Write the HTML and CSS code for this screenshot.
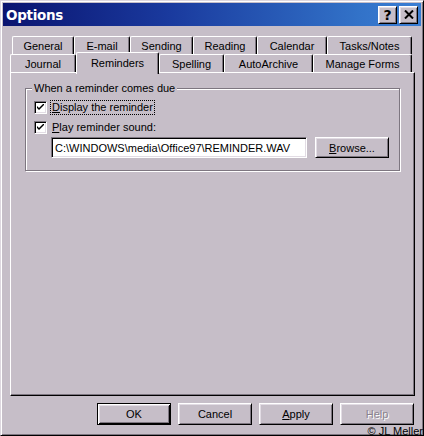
FILE: index.html
```html
<!DOCTYPE html>
<html>
<head>
<meta charset="utf-8">
<title>Options</title>
<link rel="stylesheet" href="styles.css">
</head>
<body>
<div class="window">
  <div class="titlebar">
    <span class="title">Options</span>
    <div class="tb-buttons">
      <span class="tb-btn help">?</span>
      <span class="tb-btn close"><svg width="10" height="9" viewBox="0 0 10 9"><path d="M1 0.5 L9 8.5 M9 0.5 L1 8.5" stroke="#000" stroke-width="2" fill="none"/></svg></span>
    </div>
  </div>
  <div class="content">
    <div class="tabs">
      <div class="tabrow back">
        <div class="tab w-general">General</div>
        <div class="tab w-email">E-mail</div>
        <div class="tab w-sending">Sending</div>
        <div class="tab w-reading">Reading</div>
        <div class="tab w-calendar">Calendar</div>
        <div class="tab w-tasks">Tasks/Notes</div>
      </div>
      <div class="tabrow front">
        <div class="tab w-journal">Journal</div>
        <div class="tab selected w-reminders">Reminders</div>
        <div class="tab w-spelling">Spelling</div>
        <div class="tab w-archive">AutoArchive</div>
        <div class="tab w-forms">Manage Forms</div>
      </div>
    </div>
    <div class="panel">
      <div class="group">
        <span class="legend">When a reminder comes due</span>
        <div class="row">
          <span class="checkbox"><svg width="7" height="7" viewBox="0 0 7 7"><path d="M0 2 L0 4 L2 6 L7 1 L7 -1 L2 4 Z" fill="#000"/></svg></span>
          <span class="label focus"><u>D</u>isplay the reminder</span>
        </div>
        <div class="row">
          <span class="checkbox"><svg width="7" height="7" viewBox="0 0 7 7"><path d="M0 2 L0 4 L2 6 L7 1 L7 -1 L2 4 Z" fill="#000"/></svg></span>
          <span class="label"><u>P</u>lay reminder sound:</span>
        </div>
        <div class="filerow">
          <div class="field">C:\WINDOWS\media\Office97\REMINDER.WAV</div>
          <div class="btn browse"><u>B</u>rowse...</div>
        </div>
      </div>
    </div>
    <div class="buttons">
      <div class="btn default">OK</div>
      <div class="btn">Cancel</div>
      <div class="btn"><u>A</u>pply</div>
      <div class="btn disabled">Help</div>
    </div>
  </div>
  <div class="copyright">© JL Meller</div>
</div>
</body>
</html>
```

FILE: styles.css
```css
html, body {
  margin: 0;
  padding: 0;
  background: #c6bec8;
}

.window {
  position: relative;
  width: 424px;
  height: 436px;
  box-sizing: border-box;
  background: #c6bec8;
  border: 1px solid;
  border-color: #ddd7df #000 #000 #ddd7df;
  box-shadow: inset 1px 1px 0 #fff, inset -1px -1px 0 #7d7680;
  padding: 2px;
  font-family: "Liberation Sans", Arial, sans-serif;
  font-size: 11px;
  color: #000;
  overflow: hidden;
}

.titlebar {
  height: 23px;
  display: flex;
  align-items: center;
  justify-content: space-between;
  background: linear-gradient(90deg, #0a1470 0%, #1a3a9e 40%, #3272c8 85%, #3a7ed4 100%);
  padding: 0 3px 0 3px;
}

.title {
  color: #fff;
  font-family: "DejaVu Sans", Verdana, sans-serif;
  font-weight: bold;
  font-size: 13.5px;
  letter-spacing: -0.3px;
}

.tb-buttons {
  display: flex;
  gap: 2px;
}

.tb-btn {
  box-sizing: border-box;
  width: 19px;
  height: 18px;
  display: flex;
  align-items: center;
  justify-content: center;
  background: #c6bec8;
  border: 1px solid;
  border-color: #fff #000 #000 #fff;
  box-shadow: inset 1px 1px 0 #e2dce4, inset -1px -1px 0 #7d7680;
}

.tb-btn.help {
  font-family: "DejaVu Sans", sans-serif;
  font-weight: bold;
  font-size: 14px;
  line-height: 1;
}

.content {
  padding: 10px 6px 0 7px;
}

.tabrow {
  display: flex;
  height: 18px;
}

.tabrow.back {
  margin-left: 2px;
}

.tab {
  box-sizing: border-box;
  height: 18px;
  display: flex;
  align-items: center;
  justify-content: center;
  background: #c6bec8;
  border-top: 1px solid #fff;
  border-left: 1px solid #fff;
  border-right: 1px solid #000;
  border-radius: 2px 2px 0 0;
  box-shadow: inset -1px 0 0 #7d7680;
  padding-top: 1px;
}

.tab.selected {
  position: relative;
  z-index: 2;
  height: 22px;
  margin-top: -2px;
  margin-bottom: -2px;
  padding-bottom: 3px;
}

.w-general { width: 62px; }
.w-email { width: 56px; }
.w-sending { width: 63px; }
.w-reading { width: 64px; }
.w-calendar { width: 70px; }
.w-tasks { width: 85px; }
.w-journal { width: 66px; }
.w-reminders { width: 83px; }
.w-spelling { width: 65px; }
.w-archive { width: 89px; }
.w-forms { width: 99px; }

.panel {
  box-sizing: border-box;
  height: 324px;
  border: 1px solid;
  border-color: #fff #000 #000 #fff;
  box-shadow: inset -1px -1px 0 #7d7680;
  padding: 15px 14px 0 14px;
}

.group {
  position: relative;
  border: 1px solid #7d7680;
  box-shadow: inset 1px 1px 0 #fff, 1px 1px 0 #fff;
  padding: 8px 8px 12px 8px;
}

.legend {
  position: absolute;
  top: -7px;
  left: 6px;
  padding: 0 2px;
  background: #c6bec8;
  line-height: 13px;
}

.row {
  display: flex;
  align-items: center;
  height: 20px;
}

.checkbox {
  box-sizing: border-box;
  width: 13px;
  height: 13px;
  background: #fff;
  border: 1px solid;
  border-color: #7d7680 #fff #fff #7d7680;
  box-shadow: inset 1px 1px 0 #000, inset -1px -1px 0 #e2dce4;
  display: flex;
  align-items: center;
  justify-content: center;
}

.label {
  margin-left: 3px;
  padding: 0 1px;
  line-height: 13px;
  border: 1px solid transparent;
}

.label.focus {
  border: 1px dotted #000;
}

.filerow {
  display: flex;
  gap: 8px;
  margin-left: 17px;
}

.field {
  box-sizing: border-box;
  width: 256px;
  height: 21px;
  background: #fff;
  border: 1px solid;
  border-color: #7d7680 #fff #fff #7d7680;
  box-shadow: inset 1px 1px 0 #000, inset -1px -1px 0 #e2dce4;
  padding: 0 3px;
  display: flex;
  align-items: center;
  white-space: nowrap;
  overflow: hidden;
}

.btn {
  box-sizing: border-box;
  width: 74px;
  height: 22px;
  display: flex;
  align-items: center;
  justify-content: center;
  background: #c6bec8;
  border: 1px solid;
  border-color: #fff #000 #000 #fff;
  box-shadow: inset 1px 1px 0 #e2dce4, inset -1px -1px 0 #7d7680;
}

.btn.browse {
  height: 21px;
}

.btn.default {
  border: 1px solid #000;
  box-shadow: inset 1px 1px 0 #fff, inset -1px -1px 0 #000, inset 2px 2px 0 #e2dce4, inset -2px -2px 0 #7d7680;
}

.btn.disabled {
  color: #8a838e;
  text-shadow: 1px 1px 0 #fff;
}

.buttons {
  display: flex;
  justify-content: flex-end;
  gap: 7px;
  margin-top: 7px;
  margin-right: 1px;
}

.copyright {
  position: absolute;
  right: 0;
  bottom: -2px;
  font-family: "Liberation Sans", Arial, sans-serif;
  font-size: 11px;
  color: #000;
  line-height: 12px;
}
```
